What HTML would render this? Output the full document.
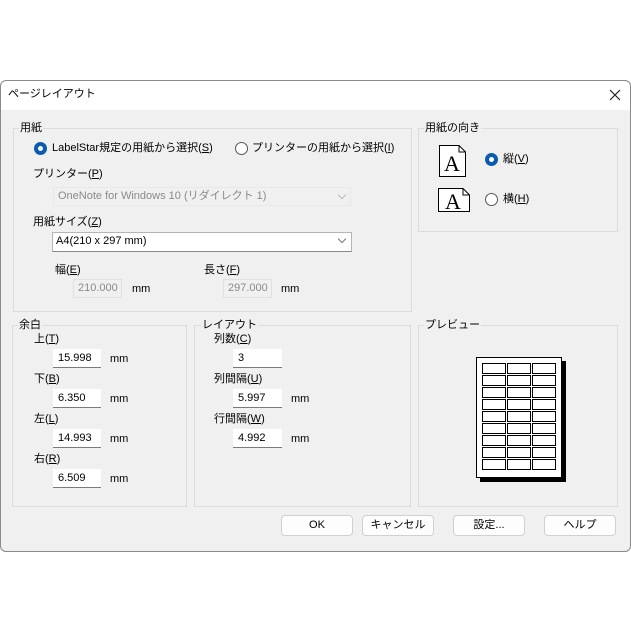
<!DOCTYPE html>
<html><head><meta charset="utf-8"><style>
*{box-sizing:border-box}
body{margin:0;width:631px;height:631px;background:#fff;position:relative;overflow:hidden;font-family:"Liberation Sans","Noto Sans CJK JP",sans-serif;font-size:11px;color:#000}
.a{position:absolute;white-space:nowrap;line-height:13px}
#dlg{position:absolute;left:0;top:81px;width:631px;height:471px;background:#f0f0f0;border-radius:6px;overflow:hidden}
#bd{position:absolute;left:0;top:80px;width:631px;height:472px;border:1px solid #8a8a8a;border-radius:6px}
#tb{position:absolute;left:0;top:0;width:631px;height:29px;background:#fff}
.g{position:absolute;border:1px solid #dcdcdc}
.gl{position:absolute;background:#f0f0f0;padding:0 1px;line-height:13px}
.in{position:absolute;height:19px;background:#fff;border-bottom:1px solid #7a7a7a;padding:3px 0 0 5px;line-height:13px}
.dis{position:absolute;height:19px;background:#f0f0f0;border:1px solid #e0e0e0;color:#8a8a8a;padding:2px 0 0 4px;line-height:13px}
.rad{position:absolute;width:13px;height:13px;border-radius:50%}
.on{background:#fff;border:4px solid #0b5cad;width:13px;height:13px}
.off{border:1px solid #555;background:#fff}
.btn{position:absolute;width:72px;height:21px;background:#fdfdfd;border:1px solid #d0d0d0;border-radius:4px;text-align:center;line-height:19px}
.chev{position:absolute;width:6px;height:6px;border-right:1px solid #777;border-bottom:1px solid #777;transform:rotate(45deg)}
u{text-decoration:underline}
</style></head><body>
<div id="dlg">
<div id="tb"></div>
<div class="a" style="left:8px;top:7px">ページレイアウト</div>
<svg style="position:absolute;left:609px;top:8px" width="12" height="12"><path d="M1 1L11 11M11 1L1 11" stroke="#222" stroke-width="1.2"/></svg>

<div class="g" style="left:13px;top:47px;width:399px;height:184px"></div>
<div class="gl" style="left:19px;top:41px">用紙</div>
<div class="rad on" style="left:34px;top:61px"></div>
<div class="a" style="left:52px;top:61px">LabelStar規定の用紙から選択(<u>S</u>)</div>
<div class="rad off" style="left:235px;top:61px"></div>
<div class="a" style="left:252px;top:61px">プリンターの用紙から選択(<u>I</u>)</div>
<div class="a" style="left:33px;top:87px">プリンター(<u>P</u>)</div>
<div class="dis" style="left:53px;top:106px;width:298px;border-color:#e8e8e8">OneNote for Windows 10 (リダイレクト 1)</div>
<div class="chev" style="left:339px;top:111px;border-color:#bbb"></div>
<div class="a" style="left:33px;top:135px">用紙サイズ(<u>Z</u>)</div>
<div style="position:absolute;left:52px;top:151px;width:300px;height:20px;background:#fff;border:1px solid #b5b5b5;border-bottom-color:#888"></div>
<div class="a" style="left:56px;top:154px">A4(210 x 297 mm)</div>
<div class="chev" style="left:339px;top:155px"></div>
<div class="a" style="left:55px;top:183px">幅(<u>E</u>)</div>
<div class="a" style="left:204px;top:183px">長さ(<u>F</u>)</div>
<div class="dis" style="left:73px;top:198px;width:49px;text-align:right;padding-right:5px">210.000</div>
<div class="a" style="left:132px;top:202px">mm</div>
<div class="dis" style="left:223px;top:198px;width:49px;text-align:right;padding-right:5px">297.000</div>
<div class="a" style="left:281px;top:202px">mm</div>

<div class="g" style="left:418px;top:47px;width:200px;height:104px"></div>
<div class="gl" style="left:424px;top:41px">用紙の向き</div>
<svg style="position:absolute;left:438px;top:63px" width="30" height="34"><path d="M1.5 1.5H21L27.5 8V32.5H1.5Z" fill="#fff" stroke="#000"/><path d="M21 1.5V8H27.5" fill="none" stroke="#000"/><text x="14" y="27" font-family="Liberation Serif" font-size="22" text-anchor="middle">A</text></svg>
<div class="rad on" style="left:485px;top:72px"></div>
<div class="a" style="left:503px;top:72px">縦(<u>V</u>)</div>
<svg style="position:absolute;left:437px;top:106px" width="34" height="26"><path d="M1.5 1.5H26L32.5 8V24.5H1.5Z" fill="#fff" stroke="#000"/><path d="M26 1.5V8H32.5" fill="none" stroke="#000"/><text x="16" y="22" font-family="Liberation Serif" font-size="22" text-anchor="middle">A</text></svg>
<div class="rad off" style="left:485px;top:112px"></div>
<div class="a" style="left:503px;top:112px">横(<u>H</u>)</div>

<div class="g" style="left:12px;top:244px;width:175px;height:182px"></div>
<div class="gl" style="left:18px;top:238px">余白</div>
<div class="a" style="left:34px;top:252px">上(<u>T</u>)</div>
<div class="in" style="left:53px;top:268px;width:48px">15.998</div><div class="a" style="left:110px;top:272px">mm</div>
<div class="a" style="left:34px;top:292px">下(<u>B</u>)</div>
<div class="in" style="left:53px;top:308px;width:48px">6.350</div><div class="a" style="left:110px;top:312px">mm</div>
<div class="a" style="left:34px;top:332px">左(<u>L</u>)</div>
<div class="in" style="left:53px;top:348px;width:48px">14.993</div><div class="a" style="left:110px;top:352px">mm</div>
<div class="a" style="left:34px;top:372px">右(<u>R</u>)</div>
<div class="in" style="left:53px;top:388px;width:48px">6.509</div><div class="a" style="left:110px;top:392px">mm</div>

<div class="g" style="left:194px;top:244px;width:217px;height:182px"></div>
<div class="gl" style="left:201px;top:238px">レイアウト</div>
<div class="a" style="left:214px;top:252px">列数(<u>C</u>)</div>
<div class="in" style="left:233px;top:268px;width:49px">3</div>
<div class="a" style="left:214px;top:292px">列間隔(<u>U</u>)</div>
<div class="in" style="left:233px;top:308px;width:49px">5.997</div><div class="a" style="left:291px;top:312px">mm</div>
<div class="a" style="left:214px;top:332px">行間隔(<u>W</u>)</div>
<div class="in" style="left:233px;top:348px;width:49px">4.992</div><div class="a" style="left:291px;top:352px">mm</div>

<div class="g" style="left:418px;top:244px;width:200px;height:182px"></div>
<div class="gl" style="left:424px;top:238px">プレビュー</div>
<svg style="position:absolute;left:476px;top:276px" width="92" height="126">
<rect x="4" y="4" width="86" height="121" fill="#000"/>
<rect x="0.5" y="0.5" width="85" height="120" fill="#fff" stroke="#000"/>
<g fill="#fff" stroke="#000">
<rect x="6.5" y="6.5" width="23" height="10"/><rect x="31.5" y="6.5" width="23" height="10"/><rect x="56.5" y="6.5" width="23" height="10"/>
<rect x="6.5" y="18.5" width="23" height="10"/><rect x="31.5" y="18.5" width="23" height="10"/><rect x="56.5" y="18.5" width="23" height="10"/>
<rect x="6.5" y="30.5" width="23" height="10"/><rect x="31.5" y="30.5" width="23" height="10"/><rect x="56.5" y="30.5" width="23" height="10"/>
<rect x="6.5" y="42.5" width="23" height="10"/><rect x="31.5" y="42.5" width="23" height="10"/><rect x="56.5" y="42.5" width="23" height="10"/>
<rect x="6.5" y="54.5" width="23" height="10"/><rect x="31.5" y="54.5" width="23" height="10"/><rect x="56.5" y="54.5" width="23" height="10"/>
<rect x="6.5" y="66.5" width="23" height="10"/><rect x="31.5" y="66.5" width="23" height="10"/><rect x="56.5" y="66.5" width="23" height="10"/>
<rect x="6.5" y="78.5" width="23" height="10"/><rect x="31.5" y="78.5" width="23" height="10"/><rect x="56.5" y="78.5" width="23" height="10"/>
<rect x="6.5" y="90.5" width="23" height="10"/><rect x="31.5" y="90.5" width="23" height="10"/><rect x="56.5" y="90.5" width="23" height="10"/>
<rect x="6.5" y="102.5" width="23" height="10"/><rect x="31.5" y="102.5" width="23" height="10"/><rect x="56.5" y="102.5" width="23" height="10"/>
</g></svg>

<div class="btn" style="left:281px;top:434px">OK</div>
<div class="btn" style="left:362px;top:434px">キャンセル</div>
<div class="btn" style="left:453px;top:434px">設定...</div>
<div class="btn" style="left:544px;top:434px">ヘルプ</div>
</div>
<div id="bd"></div>
</body></html>
